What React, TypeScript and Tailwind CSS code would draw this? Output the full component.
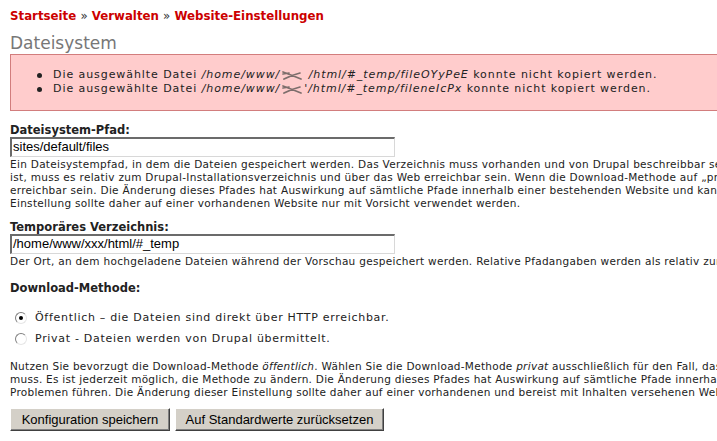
import React from "react";

const verdana = "font-['DejaVu_Sans',Verdana,sans-serif]";
const arial = "font-['Liberation_Sans',Arial,sans-serif]";

function Scribble() {
  return (
    <svg width="20" height="9" viewBox="0 0 20 9" className="mx-[2px] inline-block">
      <path d="M1 1 Q9 4 19 8 M2 8 Q10 4 18 2 M1 3 L7 2" stroke="#7d6e6c" strokeWidth="1.7" fill="none" strokeLinecap="round" />
    </svg>
  );
}

function Radio({ checked }: { checked?: boolean }) {
  return (
    <span className="relative inline-block h-[12px] w-[12px] shrink-0 rounded-full border border-t-[#808080] border-l-[#808080] border-r-[#e6e6e6] border-b-[#e6e6e6] bg-white">
      {checked && <span className="absolute left-[3px] top-[3px] h-[4px] w-[4px] rounded-full bg-black" />}
    </span>
  );
}

function TextInput({ value }: { value: string }) {
  return (
    <div
      className={`h-[20px] w-[385px] border-t-2 border-l-2 border-b border-r border-t-[#6b6b6b] border-l-[#6b6b6b] border-b-[#d8d8d8] border-r-[#d8d8d8] bg-white pl-[1px] text-[13px] leading-[16px] text-black ${arial}`}
    >
      {value}
    </div>
  );
}

function Lines({ lines, className }: { lines: string[]; className?: string }) {
  return (
    <div className={className}>
      {lines.map((l, i) => (
        <div key={i} className="whitespace-nowrap">
          {l}
        </div>
      ))}
    </div>
  );
}

function ErrorLine({ file, lead }: { file: string; lead: string }) {
  return (
    <div className="flex items-center whitespace-nowrap">
      <span className="mr-[11px] inline-block h-[5px] w-[5px] rounded-full bg-[#222]" />
      Die ausgewählte Datei&nbsp;
      <i>/home/www/</i>
      <Scribble />
      <i>
        {lead}/html/#_temp/{file}
      </i>
      &nbsp;konnte nicht kopiert werden.
    </div>
  );
}

export default function App() {
  return (
    <div className="h-[441px] w-[717px] overflow-hidden bg-white">
      <div className={`w-[1100px] pl-[10px] text-black ${verdana}`}>
        <div className="pt-[9px] text-[11.8px] font-bold leading-[14px] text-[#cc0000]">
          Startseite <span className="font-normal text-[#333]">»</span> Verwalten{" "}
          <span className="font-normal text-[#333]">»</span> Website-Einstellungen
        </div>

        <h2 className="mt-[10px] text-[17px] leading-[20px] text-[#777]">Dateisystem</h2>

        <div className="mt-[1px] h-[57px] border border-[#d27d7d] bg-[#ffcccc] pl-[26px] pt-[13px] text-[11px] leading-[14px] tracking-[0.93px] text-[#222]">
          <ErrorLine lead={"\u00a0"} file="fileOYyPeE" />
          <ErrorLine lead="'" file="fileneIcPx" />
        </div>

        <div className="mt-[12px] text-[11.5px] font-bold leading-[14px] text-[#222]">Dateisystem-Pfad:</div>
        <TextInput value="sites/default/files" />
        <Lines
          className="mt-[1px] text-[10.5px] leading-[13px] tracking-[0.3px] text-[#222]"
          lines={[
            "Ein Dateisystempfad, in dem die Dateien gespeichert werden. Das Verzeichnis muss vorhanden und von Drupal beschreibbar sein. Wenn das Verzeichnis innerhalb der Drupal-Installation",
            "ist, muss es relativ zum Drupal-Installationsverzeichnis und über das Web erreichbar sein. Wenn die Download-Methode auf „privat“ gestellt ist, sollte dieses Verzeichnis nicht über das Web",
            "erreichbar sein. Die Änderung dieses Pfades hat Auswirkung auf sämtliche Pfade innerhalb einer bestehenden Website und kann zu Problemen führen. Die Änderung dieser",
            "Einstellung sollte daher auf einer vorhandenen Website nur mit Vorsicht verwendet werden.",
          ]}
        />

        <div className="mt-[10px] text-[11.5px] font-bold leading-[14px] text-[#222]">Temporäres Verzeichnis:</div>
        <TextInput value="/home/www/xxx/html/#_temp" />
        <Lines
          className="mt-[1px] text-[10.5px] leading-[13px] tracking-[0.3px] text-[#222]"
          lines={[
            "Der Ort, an dem hochgeladene Dateien während der Vorschau gespeichert werden. Relative Pfadangaben werden als relativ zum Drupal-Installationsverzeichnis interpretiert.",
          ]}
        />

        <div className="mt-[13px] text-[11.5px] font-bold leading-[14px] text-[#222]">Download-Methode:</div>
        <div className="mt-[16px] flex flex-col gap-[7px] pl-[5px] text-[11px] leading-[14px] tracking-[0.7px] text-[#222]">
          <label className="flex items-center gap-[8px] whitespace-nowrap">
            <Radio checked />
            Öffentlich – die Dateien sind direkt über HTTP erreichbar.
          </label>
          <label className="flex items-center gap-[8px] whitespace-nowrap">
            <Radio />
            Privat - Dateien werden von Drupal übermittelt.
          </label>
        </div>

        <div className="mt-[14px] text-[10.5px] leading-[13px] tracking-[0.27px] text-[#222]">
          <div className="whitespace-nowrap">
            Nutzen Sie bevorzugt die Download-Methode <i>öffentlich</i>. Wählen Sie die Download-Methode <i>privat</i>{" "}
            ausschließlich für den Fall, dass der Zugriff auf die Dateien kontrolliert werden
          </div>
          <div className="whitespace-nowrap">
            muss. Es ist jederzeit möglich, die Methode zu ändern. Die Änderung dieses Pfades hat Auswirkung auf sämtliche Pfade innerhalb einer bestehenden Website
          </div>
          <div className="whitespace-nowrap">
            Problemen führen. Die Änderung dieser Einstellung sollte daher auf einer vorhandenen und bereist mit Inhalten versehenen Website nur mit Vorsicht
          </div>
        </div>

        <div className={`mt-[9px] flex gap-[5px] ${arial} text-[13px]`}>
          <button
            type="button"
            className="h-[23px] w-[160px] border border-t-white border-l-white border-b-[#404040] border-r-[#404040] bg-[#d4d0c8] leading-[20px] text-black shadow-[inset_-1px_-1px_0_#808080]"
          >
            Konfiguration speichern
          </button>
          <button
            type="button"
            className="h-[23px] w-[209px] border border-t-white border-l-white border-b-[#404040] border-r-[#404040] bg-[#d4d0c8] leading-[20px] text-black shadow-[inset_-1px_-1px_0_#808080]"
          >
            Auf Standardwerte zurücksetzen
          </button>
        </div>
      </div>
    </div>
  );
}
